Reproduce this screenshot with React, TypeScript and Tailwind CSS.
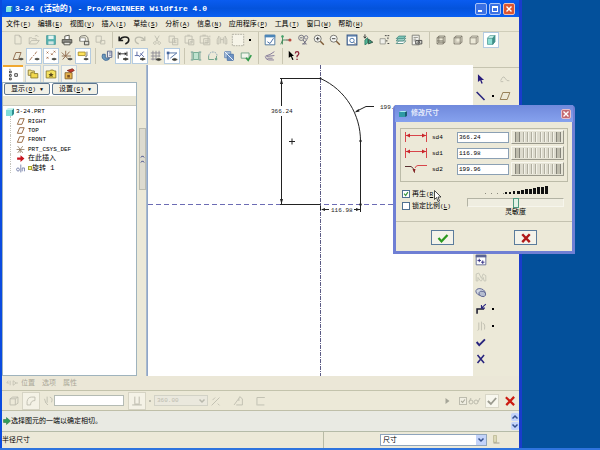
import React, { useState } from "react";
import clsx from "clsx";
import { twMerge } from "tailwind-merge";

type GlyphProps = { children: React.ReactNode; className?: string };

const Glyph = ({ children, className }: GlyphProps) => (
  <svg
    viewBox="0 0 16 16"
    className={twMerge("size-4 shrink-0", className)}
    fill="none"
    stroke="#4b4b44"
    aria-hidden="true"
  >
    {children}
  </svg>
);

const GRAY = "#bdbcae";

const icons: Record<string, React.ReactNode> = {
  // File
  new: <path d="M4.5 2.5h5l2 2v8h-7z M9.500 2.500v2h2" stroke={GRAY} />,
  open: <path d="M2.500 12.500v-7h3l1 1h4v2M2.500 12.500l2.500-4h9l-3 4zM9 3.500q3-2 4 1" stroke={GRAY} />,
  save: (
    <>
      <path d="M3 3h10v10H3z" fill="#58b3b0" stroke="#4d9c9c" />
      <path d="M5 3h6v4H5z" fill="#e4f4f2" stroke="none" />
      <path d="M5 9.500h6V13H5z" fill="#d2e6e4" stroke="none" />
    </>
  ),
  print: (
    <>
      <path d="M5.500 7V3.500l5-1V7" fill="#fff" />
      <path d="M2.500 7.500h11v4h-11z" fill="#8b8b86" />
      <path d="M4.500 10.500h7v3h-7z" fill="#e6e6e0" />
    </>
  ),
  mail: (
    <>
      <path d="M3 9.500V5q1-2 5-2h2q3 1 3 6" stroke="#6f6f68" />
      <path d="M3.500 5.500h6v4h-6z" fill="#fff" stroke="#8a8a82" />
      <path d="M8.500 9.500h5v4h-5z" fill="#dcdcd4" stroke="#44443e" />
    </>
  ),
  send: <path d="M3.500 3.500h6v7h-6zM8.500 8.500h5v4h-5z" stroke={GRAY} />,
  // Edit
  undo: <path d="M2.500 4v4.500H7M3 8C6 3 13.500 4 13.500 8q0 3-4 4.500" stroke="#1c1c1c" strokeWidth="1.8" />,
  redo: <path d="M13.500 4v4.500H9M13 8C10 3 2.500 4 2.500 8q0 3 4 4.500" stroke={GRAY} strokeWidth="1.4" />,
  cut: <path d="M5.500 3l4 7M10.500 3l-4 7M5.500 10a1.500 1.500 0 1 0 .1 0M10.500 10a1.500 1.500 0 1 0 .1 0" stroke={GRAY} />,
  copy: <path d="M3.500 3.500h6v7h-6zM7.500 6.500h6v7h-6zM9 9h3M9 11h3" stroke={GRAY} />,
  paste: <path d="M3.500 3.500h8v8h-8zM7.500 7.500h6v6h-6zM9 10h3M6 2.500h3" stroke={GRAY} />,
  pasteSpecial: <path d="M2.500 3.500h9v8h-9zM6.500 6.500h7v7h-7zM8 9h4M8 11h4M5 2.500h4M13.500 3v2" stroke={GRAY} />,
  find: <path d="M2.500 12.500v-5l2-4v9zM13.500 12.500v-5l-2-4v9zM6.500 5v7M9.500 5v7M6.500 7.500h3" stroke={GRAY} />,
  select: <path d="M1.500 1.500h13v13h-13z" fill="#f6f4e8" stroke="#aaa99c" strokeDasharray="2 1" />,
  // View
  repaint: (
    <>
      <path d="M2.500 2.500h11v11h-11z" fill="#fff" stroke="#416f9a" />
      <path d="M2 2h12v3H2z" fill="#4c86b8" stroke="none" />
      <path d="M5 10l3 2 4-6" stroke="#355f9a" />
    </>
  ),
  spin: (
    <>
      <path d="M4 3v5l4 0M4 8v5M4 8l-2 5" stroke="#3f8657" />
      <path d="M8 8h4" stroke="#444" />
      <circle cx="4" cy="4" r="1.500" fill="#45a36b" stroke="none" />
      <circle cx="12.500" cy="8" r="1.800" fill="#b9483c" stroke="none" />
    </>
  ),
  orientMode: (
    <>
      <circle cx="6" cy="5.500" r="3" stroke="#6b6b77" />
      <circle cx="11.500" cy="5" r="2" stroke="#77778a" />
      <path d="M4.500 5.500h3M8 8l4 5M12.500 7.500l-4 5M7 12.500h4" stroke="#5b5b74" />
    </>
  ),
  zoomIn: (
    <>
      <circle cx="6.500" cy="6.500" r="4" fill="#f6f7f4" stroke="#6d6d68" />
      <path d="M4.500 6.500h4M6.500 4.500v4" stroke="#333" />
      <path d="M9.500 9.500l4 4" stroke="#7d5a36" strokeWidth="1.600" />
    </>
  ),
  zoomOut: (
    <>
      <circle cx="6.500" cy="6.500" r="4" fill="#f6f7f4" stroke="#6d6d68" />
      <path d="M4.500 6.500h4" stroke="#333" />
      <path d="M9.500 9.500l4 4" stroke="#7d5a36" strokeWidth="1.600" />
    </>
  ),
  refit: (
    <>
      <path d="M2.500 2.500h11v11h-11z" fill="#fff" stroke="#3e5f8c" strokeWidth="1.400" />
      <path d="M3 3.500h10" stroke="#3e6ea8" />
      <circle cx="8" cy="8.500" r="2.500" stroke="#3e6ea8" />
      <path d="M10 10.500l2 2" stroke="#555" />
    </>
  ),
  reorient: (
    <>
      <path d="M4.500 8l3-2.500v6l-3 2z" fill="#53b795" stroke="#2f7f68" />
      <path d="M4.500 1.500v4M3 4l1.500 2L6 4" stroke="#2b2b2b" />
      <path d="M8.500 7l5 3.500-5 2z" fill="#3a9c7c" stroke="#2b4b40" />
    </>
  ),
  views: (
    <>
      <path d="M3.500 6.500h6v6h-6z" fill="#f0f0ea" stroke="#9a9a90" />
      <path d="M9 3h2M12 3h2M12.500 5v2M10 9h2M12 12h2" stroke="#333" />
    </>
  ),
  layers: (
    <>
      <path d="M2.500 12l3-3h8l-3 3z" fill="#fff" stroke="#4f8b84" />
      <path d="M2.500 9l3-3h8l-3 3z" fill="#a8dcd0" stroke="#4f8b84" />
      <path d="M2.500 6.500l3-3h8l-3 3z" fill="#7cc8b8" stroke="#4f8b84" />
    </>
  ),
  viewManager: (
    <>
      <path d="M2.500 2.500h8v11h-8z" fill="#f7f7f2" stroke="#77776f" />
      <path d="M4 5h5M4 7h3M4 9h2" stroke="#88887e" />
      <path d="M6.500 8.500h7v4h-7z" fill="#d8d8d0" stroke="#444" />
      <circle cx="10" cy="10.500" r="1" stroke="#333" />
    </>
  ),
  wireframe: <path d="M3.500 5.500h7v7h-7zM5.500 3.500h7v7h-7zM3.500 5.500l2-2M10.500 5.500l2-2M3.500 12.500l2-2M10.500 12.500l2-2M3.500 9h7" stroke="#7a7668" />,
  hiddenLine: (
    <>
      <path d="M5.500 3.500v7h7M3.500 12.500l2-2" stroke="#b9b5a8" />
      <path d="M3.500 5.500h7v7h-7zM3.500 5.500l2-2h7v7l-2 2M10.500 5.500l2-2" stroke="#7a7668" />
    </>
  ),
  noHidden: <path d="M3.500 5.500h7v7h-7zM3.500 5.500l2-2h7v7l-2 2M10.500 5.500l2-2" stroke="#8a8678" />,
  shaded: (
    <>
      <path d="M4 6h6v7H4z" fill="#8fe0d6" stroke="#5fa69f" />
      <path d="M4 6l2.500-3h6L10 6z" fill="#d3f6f0" stroke="#5fa69f" />
      <path d="M10 6l2.500-3v7L10 13z" fill="#3f8f88" stroke="#3f8f88" />
    </>
  ),
  // Datum display
  plane: (
    <>
      <path d="M2.500 12l3-8h6l-3 8z" stroke="#8a6547" />
      <path d="M9 11.500q2.500-2 5 0q-2.500 2-5 0" fill="#444" />
    </>
  ),
  axis: (
    <>
      <path d="M3 13l3-4M7 8l1-1M9 6l2-3" stroke="#a06a48" />
      <path d="M9 11.500q2.500-2 5 0q-2.500 2-5 0" fill="#444" />
    </>
  ),
  points: (
    <>
      <path d="M3 3l2 2M5 3L3 5M8 5l2 2M10 5L8 7M3 9l2 2M5 9l-2 2M11 2l2 2M13 2l-2 2" stroke="#a06a48" />
      <path d="M9 11.500q2.500-2 5 0q-2.500 2-5 0" fill="#444" />
    </>
  ),
  csys: (
    <>
      <path d="M2 4l8 8M3 12l8-9M6.500 2v6h6M2 8h4" stroke="#8a6547" />
      <path d="M9 11.500q2.500-2 5 0q-2.500 2-5 0" fill="#444" />
    </>
  ),
  note: (
    <>
      <path d="M2.500 3.500h8v4h-8z" fill="#ffe45c" stroke="#a58a2a" />
      <path d="M12.500 3v5l-2 1" stroke="#666" />
      <path d="M9 11.500q2.500-2 5 0q-2.500 2-5 0" fill="#444" />
    </>
  ),
  // Sketcher display
  sketchView: (
    <>
      <path d="M8.500 2.500h5v7h-5z" fill="#fff" stroke="#46537f" />
      <path d="M10 4.500h3M10 7h3" stroke="#46537f" />
      <path d="M3 6q-2 5 3 7q4 0 5-2l-5-1V6z" fill="#6c9bc0" stroke="#3c6491" />
    </>
  ),
  dims: (
    <>
      <path d="M2.500 3v8M12.500 3v5M3 5.500h9" stroke="#222" />
      <path d="M3 5.500l2-2v4zM12 5.500l-2-2v4z" fill="#222" stroke="none" />
      <path d="M8 11.500q3-2.500 6 0q-3 2.500-6 0" fill="#333" />
    </>
  ),
  constraints: (
    <>
      <path d="M4.500 3v4M2 7.500h5M7 9l5-6M8.500 5l4 4" stroke="#4c5d9c" />
      <path d="M8 11.500q3-2.500 6 0q-3 2.500-6 0" fill="#333" />
    </>
  ),
  grid: (
    <>
      <path d="M2 4.500h11M2 8h11M2 11.500h7M4.500 2v11M8 2v11M11.500 2v7" stroke="#8b8994" />
      <path d="M8 12q3-2.500 6 0q-3 2.500-6 0" fill="#333" />
    </>
  ),
  vertices: (
    <>
      <path d="M3.500 12V4.500h10L6 10.500" stroke="#45669c" />
      <path d="M2 3h3v3H2z" fill="#45669c" stroke="none" />
      <path d="M8 12q3-2.500 6 0q-3 2.500-6 0" fill="#333" />
    </>
  ),
  shadeLoops: (
    <>
      <path d="M5 4h6v8H5z" fill="#bfe3cf" stroke="#6aa58c" />
      <path d="M2 3.500h3M11 3.500h3M2 12.500h3M11 12.500h3M3.500 3v10M12.500 3v10" stroke="#6f9f93" />
    </>
  ),
  openEnds: (
    <>
      <path d="M3 8q1-5 6-4.500 4 1 3.500 5" stroke="#7d9bb0" strokeDasharray="2 1" />
      <path d="M3 8v4h6M12 8v4" stroke="#659c82" />
      <circle cx="11.500" cy="11.500" r="1.500" fill="#76a993" stroke="none" />
    </>
  ),
  overlap: (
    <>
      <path d="M3 3h7v7H3z" fill="#a9c1de" stroke="#6a8cb8" />
      <path d="M6 6h7v7H6z" fill="#6f93c4" stroke="#4d73a8" />
      <path d="M3 3l10 10" stroke="#fff" />
    </>
  ),
  requirements: (
    <>
      <path d="M2.500 4.500h9v6h-9z" fill="#f2f5ec" stroke="#6aa080" />
      <path d="M8 10l2.500 3L14 7" stroke="#2f9a4a" strokeWidth="1.800" />
    </>
  ),
  hatch: <path d="M3 8q5-1 10-5M4 8.500l9-1M2.500 8.500q1 4 4 4h6M5 10.500h6" stroke="#7a6f92" />,
  whatsThis: (
    <>
      <path d="M2 2l6 6H5.500l2 4-1.500.5-1.500-4L2 10z" fill="#000" stroke="none" />
      <path d="M9.500 5q0-2 2-2t2 2q0 1.500-2 3v1.500M11.500 11v1.500" stroke="#8c2438" strokeWidth="1.500" />
    </>
  ),
  // Sketch tools
  arrow: <path d="M4.500 2.500v9l2.500-2 1.500 4 1.500-.6L8.500 9h3z" fill="#281c7c" stroke="none" />,
  spline: <path d="M3 10q3-7 5-3t5 3M3 11h3" stroke={GRAY} />,
  line: <path d="M3 3.500l9 9" stroke="#28247e" strokeWidth="1.800" />,
  datum: <path d="M2.500 12l3-8h8l-3 8z" stroke="#8a7147" />,
  rect: <path d="M3.500 4.500h9v7h-9z" stroke="#28247e" />,
  circle: <circle cx="8" cy="8" r="4.500" stroke="#28247e" />,
  arc: <path d="M3 12q0-8 9-8" stroke="#28247e" />,
  fillet: <path d="M3 3v5q0 4 5 4h5" stroke="#28247e" />,
  point: <path d="M8 4v8M4 8h8" stroke="#28247e" />,
  modify: (
    <>
      <path d="M2.500 2.500h11v11h-11z" fill="#fff" stroke="#5a6394" />
      <path d="M2 2h12v3H2z" fill="#5a6394" stroke="none" />
      <path d="M4 8.500h4M8 10.500h4M10 8.500v4M6 6.500v4" stroke="#28247e" />
    </>
  ),
  text: <path d="M2.500 12.500v-8l3-1 3 6 2-5 3 2v6h-2l-1-4-2 4h-1l-3-4v4z" stroke="#c4c3b6" />,
  palette: (
    <>
      <ellipse cx="7.500" cy="7" rx="5.500" ry="3.800" fill="#d3d9e4" stroke="#5d6490" transform="rotate(20 7.500 7)" />
      <ellipse cx="9.500" cy="9" rx="4" ry="3" fill="#b5bdd0" stroke="#5d6490" transform="rotate(20 9.500 9)" />
    </>
  ),
  trim: (
    <>
      <path d="M3.500 13.500V8h8" stroke="#1d1d30" strokeWidth="1.800" />
      <path d="M13.500 2.500L9 6.500M8.500 3.500V7h4" stroke="#28247e" strokeWidth="1.200" />
    </>
  ),
  mirror: <path d="M5.500 4v8l-1.500 1M8.500 3v10M10 5q3 0 2 7" stroke={GRAY} />,
  done: <path d="M3 8l3 3.500L12.500 5" stroke="#28247e" strokeWidth="2.200" />,
  quit: <path d="M4 3.500l7.500 9M11.500 3.500l-7.500 9" stroke="#28247e" strokeWidth="1.800" />,
  // Dashboard
  solid: <path d="M3.500 5.500h6v7h-6zM3.500 5.500l3-2h6v7l-3 2M9.500 5.500l3-2" stroke={GRAY} />,
  surface: <path d="M3.500 12.500v-4q1-5 5-5h4v4q-5 0-5 5z" stroke={GRAY} />,
  thin: <path d="M4 5.500q1 6 4 7M7 3v7M10 3.500q4 1 2 6" stroke={GRAY} />,
  sides: <path d="M5.500 3v8M10.500 3v8M2.500 12.500h11M5 11.500h6" stroke="#b5b4a6" />,
  removeMaterial: <path d="M3 13l9-9M4 7l3-3M10 11l2 2" stroke={GRAY} />,
  thicken: <path d="M3.500 12.500L9 5l1-2 3 2.500v7H6M9 5v3" stroke={GRAY} />,
  wrap: <path d="M4.500 13v-9h9M5 12.500h8" stroke={GRAY} />,
  handle: <path d="M1 8h3M5.500 5v6M1 8l2-3M9.500 5v6l4-3zM13 8h3" stroke={GRAY} />,
};

type ToolProps = { name: string; active?: boolean };

const Tool = ({ name, active }: ToolProps) => (
  <button
    type="button"
    aria-label={name}
    className={clsx(
      "flex size-4 shrink-0 items-center justify-center",
      active && "border border-[#b4cbe0] bg-white"
    )}
  >
    <Glyph className="size-[14px]">{icons[name]}</Glyph>
  </button>
);

const Divider = () => (
  <span className="flex h-4 w-2 shrink-0 justify-center">
    <span className="h-full w-px bg-[#c9c6b2]" />
  </span>
);

const Caret = () => (
  <span className="flex w-2 shrink-0 justify-center">
    <span className="size-[2px] bg-black" />
  </span>
);

const ChevronIcon = ({ up, className }: { up?: boolean; className?: string }) => (
  <svg
    viewBox="0 0 8 8"
    className={twMerge("size-2", className)}
    fill="none"
    stroke="currentColor"
    strokeWidth="1.500"
    aria-hidden="true"
  >
    <path d={up ? "M1.500 5.500L4 3l2.500 2.500" : "M1.500 2.500L4 5l2.500-2.500"} />
  </svg>
);

const Key = ({ letter }: { letter: string }) => (
  <span className="text-[6px]">
    (<u>{letter}</u>)
  </span>
);

const menus = [
  ["文件", "F"],
  ["编辑", "E"],
  ["视图", "V"],
  ["插入", "I"],
  ["草绘", "S"],
  ["分析", "A"],
  ["信息", "N"],
  ["应用程序", "P"],
  ["工具", "T"],
  ["窗口", "W"],
  ["帮助", "H"],
];

const fileTools = ["new", "open", "save", "print", "mail", "send"];
const editTools = ["undo", "redo", "cut", "copy", "paste", "pasteSpecial", "find", "select"];
const viewTools = ["repaint", "spin", "orientMode", "zoomIn", "zoomOut", "refit", "reorient", "views", "layers", "viewManager"];
const displayTools = ["wireframe", "hiddenLine", "noHidden", "shaded"];
const datumTools = ["plane", "axis", "points", "csys", "note"];
const sketchTools = ["sketchView", "dims", "constraints", "grid", "vertices"];
const checkTools = ["shadeLoops", "openEnds", "overlap", "requirements"];
const pressed = ["shaded", "axis", "points", "note", "dims", "constraints", "vertices"];

const ToolGroup = ({ names, className }: { names: string[]; className: string }) => (
  <div className={clsx("flex shrink-0 justify-between", className)}>
    {names.map((name) => (
      <Tool key={name} name={name} active={pressed.includes(name)} />
    ))}
  </div>
);

const TitleBar = () => (
  <header className="flex h-[17px] shrink-0 items-center bg-linear-to-b from-[#0a5cf0] via-[#0453dc] to-[#0a5ff2] pr-1 pl-[3px]">
    <svg viewBox="0 0 8 8" className="size-2" aria-hidden="true">
      <path d="M1 2h5v5H1z" fill="#7ee6e0" />
      <path d="M6 2l1.500-1v5L6 7z" fill="#268f96" />
      <path d="M1 2l1.500-1h5L6 2z" fill="#c8faf4" />
    </svg>
    <h1 className="ml-0.5 flex-1 text-[8px] font-bold whitespace-pre text-white">
      3-24 (活动的) - Pro/ENGINEER Wildfire 4.0
    </h1>
    <div className="flex gap-0.5">
      <button type="button" aria-label="Minimize" className="flex size-3 items-end rounded-xs border border-[#a9c4f8] bg-[#3b71e4] p-0.5">
        <span className="h-0.5 w-1 bg-white" />
      </button>
      <button type="button" aria-label="Maximize" className="size-3 rounded-xs border border-[#a9c4f8] bg-[#3b71e4] p-0.5">
        <span className="block size-full border border-t-2 border-white" />
      </button>
      <button type="button" aria-label="Close" className="size-3 rounded-xs border border-[#f0c0b4] bg-[#dd5530] p-px">
        <svg viewBox="0 0 8 8" stroke="#fff" strokeWidth="1.400" aria-hidden="true">
          <path d="M1.500 1.500l5 5M6.500 1.500l-5 5" />
        </svg>
      </button>
    </div>
  </header>
);

const MenuBar = () => (
  <nav className="flex h-[14px] shrink-0 items-center gap-[7px] pl-1">
    {menus.map(([label, key]) => (
      <button key={key} type="button" className="shrink-0 whitespace-nowrap">
        {label}
        <Key letter={key} />
      </button>
    ))}
  </nav>
);

const Toolbars = () => (
  <div className="shrink-0 border-t border-[#cfcdb9] pb-px pl-2">
    <div className="flex items-center">
      <ToolGroup names={fileTools} className="w-[98px]" />
      <Divider />
      <ToolGroup names={editTools} className="w-[130px]" />
      <Caret />
      <Divider />
      <ToolGroup names={viewTools} className="w-[163px]" />
      <Divider />
      <ToolGroup names={displayTools} className="w-[66px]" />
    </div>
    <div className="flex items-center">
      <ToolGroup names={datumTools} className="w-[81px]" />
      <Divider />
      <ToolGroup names={sketchTools} className="w-[81px]" />
      <Divider />
      <ToolGroup names={checkTools} className="w-[66px]" />
      <Divider />
      <Tool name="hatch" />
      <Divider />
      <Tool name="whatsThis" />
    </div>
  </div>
);

const planeIcon = <path d="M2.500 13l4-10h8l-4 10z" stroke="#8f6036" strokeWidth="1.600" />;

const treeItems = [
  { label: "RIGHT", icon: planeIcon },
  { label: "TOP", icon: planeIcon },
  { label: "FRONT", icon: planeIcon },
  {
    label: "PRT_CSYS_DEF",
    icon: <path d="M3 2l9 12M3 14l9-12M1 8h14M7.500 8v6" stroke="#8d775c" strokeWidth="1.400" />,
  },
  { label: "在此插入", icon: <path d="M2 6h6V2l7 6-7 6v-4H2z" fill="#c8141e" stroke="none" /> },
  {
    label: "旋转 1",
    mark: true,
    icon: <path d="M1 10q0-3 2.500-3T6 10t-2.500 2.500T1 10M8.500 1v14M11 13V7h4v6" stroke="#6470a0" strokeWidth="1.400" />,
  },
];

const ModelTree = () => (
  <aside className="flex w-[135px] shrink-0 flex-col">
    <div className="flex h-[17px] shrink-0 gap-0.5 pl-px">
      <button type="button" aria-label="Model tree" className="flex w-5 items-center justify-center border-t-2 border-[#f0a830] bg-white">
        <Glyph className="size-[14px]">
          <path d="M4 3.500h2v2H4zM4 7.500h2v2H4zM4 11.500h2v2H4zM4 1.500h1M10 6.500h3v3h-3z" stroke="#333" />
        </Glyph>
      </button>
      <button type="button" aria-label="Folders" className="flex w-4 items-center justify-center border border-b-0 border-[#c6d3dc] bg-[#f6f5ec]">
        <Glyph className="size-[14px]">
          <path d="M2.500 3.500h3l1 1h3v5h-7z" fill="#f5e48a" stroke="#8a7a2e" />
          <path d="M5.500 6.500h3l1 1h4v5h-8z" fill="#f2d94e" stroke="#8a7a2e" />
        </Glyph>
      </button>
      <button type="button" aria-label="Favorites" className="flex w-4 items-center justify-center border border-b-0 border-[#c6d3dc] bg-[#f6f5ec]">
        <Glyph className="size-[14px]">
          <path d="M2.500 4.500h4l1-1h3l1 1h2v8h-11z" fill="#f5e25e" stroke="#8a7a2e" />
          <path d="M8 6l1 2h2L9.500 9.500l.5 2-2-1-2 1 .5-2L5 8h2z" fill="#5a4a1e" stroke="none" />
        </Glyph>
      </button>
      <button type="button" aria-label="Connections" className="flex w-4 items-center justify-center border border-b-0 border-[#c6d3dc] bg-[#f6f5ec]">
        <Glyph className="size-[14px]">
          <path d="M3.500 6.500h8v7h-8z" fill="#e8b54e" stroke="#84602a" />
          <path d="M6 4l6-2 2 2-4 2z" fill="#c23a2c" stroke="#80281e" />
          <path d="M6 9h3v3H6z" fill="#7a4f22" stroke="none" />
        </Glyph>
      </button>
    </div>
    <div className="flex min-h-0 flex-1 flex-col border border-[#9fb3bd] bg-white">
      <div className="flex shrink-0 gap-0.5 px-px pb-px">
        <button type="button" className="h-3 w-[46px] rounded-xs border border-[#5d7690] bg-[#f1f0e6] leading-none whitespace-nowrap">
          显示
          <Key letter="O" /> <span className="text-[5px]">▼</span>
        </button>
        <button type="button" className="h-3 w-[46px] rounded-xs border border-[#5d7690] bg-[#f1f0e6] leading-none whitespace-nowrap">
          设置
          <Key letter="G" /> <span className="text-[5px]">▼</span>
        </button>
      </div>
      <div className="h-[10px] shrink-0 border-b border-[#c7c7bb] bg-[#e9e7d6]" />
      <div className="pt-px pl-[3px]">
        <ul className="grid h-[66px] auto-rows-fr">
          <li className="flex items-center gap-0.5 text-[6px]">
            <svg viewBox="0 0 8 8" className="size-2" aria-hidden="true">
              <path d="M0 2h6v6H0z" fill="#7fded8" />
              <path d="M6 2l2-2v6L6 8z" fill="#2f8f90" />
              <path d="M0 2l2-2h6L6 2z" fill="#c8f4ee" />
            </svg>
            3-24.PRT
          </li>
          {treeItems.map((item) => (
            <li key={item.label} className="ml-1 flex items-center border-l border-dotted border-[#c4c4bc] pl-[5px]">
              <Glyph className="mr-[3px] size-[9px]">{item.icon}</Glyph>
              {item.mark && <span className="size-1 border border-[#a8a830] bg-[#f4f08a]" />}
              <span className={item.label.charCodeAt(0) < 128 ? "text-[6px]" : ""}>{item.label}</span>
            </li>
          ))}
        </ul>
      </div>
    </div>
  </aside>
);

const Splitter = () => (
  <div className="flex w-[11px] shrink-0">
    <div className="flex flex-1 flex-col border-r border-[#a8b8cc] pl-0.5">
      <button type="button" aria-label="Collapse panel" className="mt-[63px] flex h-[62px] flex-col items-center justify-center border border-[#bcbcb0] bg-[#dddbd0] text-[#23307c]">
        <ChevronIcon up className="size-[5px]" />
        <ChevronIcon up className="size-[5px]" />
      </button>
    </div>
    <div className="w-[3px] border-r border-[#8fa6c8] bg-[#d3deee]" />
  </div>
);

// Drawing coordinates are in window space, shifted to the canvas origin.
const Canvas = () => (
  <svg className="min-w-0 flex-1 self-stretch bg-white" role="img" aria-label="Sketch">
    <g transform="translate(-148 -65)" fill="none" stroke="#222" strokeWidth="1">
      <path d="M320.500 65v1000" stroke="#5c5c86" strokeDasharray="4 1 1 1" />
      <path d="M148 204.500h2000" stroke="#6c6cb4" strokeDasharray="5 3" />
      <path d="M280 78.500h40.500M280 204.500h40.500M360.500 141v63.500" />
      <path d="M281.500 79v27M281.500 116v88" />
      <path d="M320.500 78.500C346 90 360.500 115 360.500 141" />
      <path d="M289 141.500h6M292 138.500v6" />
      <path d="M356 111.500l10-5h8" />
      <path d="M320.500 210v-4M360.500 205v7M322 209.500h7M354 209.500h6" />
      <g fill="#222" stroke="none">
        <path d="M281.500 79l-1.500 5h3zM281.500 204l-1.500-5h3z" />
        <path d="M354.500 112.500l4-3.500 1 2.500zM321 209.500l4-1.500v3zM360 209.500l-4-1.500v3z" />
        <circle cx="320.500" cy="78.500" r="1" />
        <circle cx="360.500" cy="141" r="1.200" />
        <circle cx="360.500" cy="204.500" r="1.200" />
        <g className="text-[6px]">
          <text x="271" y="113">366.24</text>
          <text x="331" y="212">116.98</text>
          <text x="380" y="109">199.96</text>
        </g>
      </g>
    </g>
  </svg>
);

const sideTools: { name: string; caret?: boolean; extra?: string }[] = [
  { name: "arrow", extra: "spline" },
  { name: "line", caret: true, extra: "datum" },
  { name: "rect" },
  { name: "circle", caret: true },
  { name: "arc", caret: true },
  { name: "fillet", caret: true },
  { name: "spline" },
  { name: "point", caret: true },
  { name: "rect", caret: true },
  { name: "dims" },
  { name: "circle" },
  { name: "modify" },
  { name: "text" },
  { name: "palette" },
  { name: "trim", caret: true },
  { name: "mirror", caret: true },
  { name: "done" },
  { name: "quit" },
];

const SideToolbar = () => (
  <div className="w-[46px] shrink-0 pt-0.5">
    <div className="border-t border-[#c6c4b0] pt-[3px]">
      <div className="grid h-[296px] auto-rows-fr">
        {sideTools.map((tool, i) => (
          <div key={i} className="flex items-center">
            <Tool name={tool.name} />
            <span className="w-2">{tool.caret && <Caret />}</span>
            {tool.extra && <Tool name={tool.extra} />}
          </div>
        ))}
      </div>
    </div>
  </div>
);

const Dashboard = () => (
  <section className="shrink-0">
    <div className="flex h-[15px] items-center gap-[7px] border-b border-[#c3c3ac] bg-[#ebe7d7] pl-1 text-[#aaa898]">
      <span className="-mr-1 flex">
        <Glyph className="size-3">{icons.handle}</Glyph>
      </span>
      <button type="button">位置</button>
      <button type="button">选项</button>
      <button type="button">属性</button>
    </div>
    <div className="flex h-5 items-center border-b border-[#bfbfa8] pr-0.5 pl-1">
      <Tool name="solid" />
      <span className="flex border border-[#d6d4c4] bg-[#f4f2e6]">
        <Tool name="surface" />
      </span>
      <span className="-mr-0.5 flex">
        <Tool name="thin" />
      </span>
      <input aria-label="Placement" className="h-[11px] w-[70px] border border-[#b4bbb4] bg-white px-0.5" />
      <span className="ml-1 flex border border-[#d6d4c4] bg-[#f4f2e6]">
        <Tool name="sides" />
      </span>
      <span className="flex w-2 justify-center">
        <span className="size-[2px] bg-[#bdbcae]" />
      </span>
      <div className="relative">
        <select aria-label="Angle" disabled className="h-[11px] w-[54px] appearance-none border border-[#d2d2c6] bg-[#eae8dd] px-0.5 text-[6px] text-[#bcbbae] opacity-100">
          <option>360.00</option>
        </select>
        <ChevronIcon className="absolute top-0.5 right-0.5 text-[#b8b8ac]" />
      </div>
      <div className="flex gap-1.5">
        <Tool name="removeMaterial" />
        <Tool name="thicken" />
        <Tool name="wrap" />
      </div>
      <div className="ml-auto flex items-center">
        <svg viewBox="0 0 8 8" className="mr-2 size-2" aria-hidden="true">
          <path d="M2.500 1l4 3-4 3z" fill="#a5a598" />
        </svg>
        <label className="relative flex items-center">
          <input type="checkbox" aria-label="Preview" defaultChecked disabled className="absolute size-2 opacity-0" />
          <span className="size-2 border border-[#bdbcae] bg-[#f0eee2]">
            <svg viewBox="0 0 8 8" fill="none" stroke="#aaa99a" strokeWidth="1.500" aria-hidden="true">
              <path d="M1.500 4l2 2 3-4" />
            </svg>
          </span>
          <svg viewBox="0 0 14 8" className="h-2 w-[14px]" fill="none" stroke="#bdbcae" aria-hidden="true">
            <circle cx="4" cy="5" r="2" />
            <circle cx="9" cy="5" r="2" />
            <path d="M2 5l2-4M11 5l2-4" />
          </svg>
        </label>
        <button type="button" aria-label="Apply" className="mx-1 flex size-[14px] items-center justify-center border border-[#d9d7c8] bg-[#f8f7ee]">
          <Glyph className="size-3">
            <path d="M2.500 8l4 4 7-8" stroke="#9b9b90" strokeWidth="2.500" />
          </Glyph>
        </button>
        <button type="button" aria-label="Cancel feature" className="flex size-[14px] items-center justify-center">
          <Glyph className="size-3">
            <path d="M2.500 3l11 10.500M13.500 2.500L3 13.500" stroke="#cc1c12" strokeWidth="3" />
          </Glyph>
        </button>
      </div>
    </div>
    <div className="flex h-[21px] items-center border-b border-[#b5bba8] bg-[#e9eae3] pl-px">
      <Glyph className="size-2">
        <path d="M1 5h6V1l8 7-8 7v-4H1z" fill="#2f9c5a" stroke="#1c6a3a" />
      </Glyph>
      <p className="flex-1">选择图元的一端以确定相切。</p>
      <div className="flex flex-col gap-px">
        <button type="button" aria-label="Scroll up" className="flex size-2 items-center justify-center rounded-xs bg-[#c3d3fa] text-[#34508e]">
          <ChevronIcon up />
        </button>
        <button type="button" aria-label="Scroll down" className="flex size-2 items-center justify-center rounded-xs bg-[#c3d3fa] text-[#34508e]">
          <ChevronIcon />
        </button>
      </div>
    </div>
    <footer className="flex h-4 items-center">
      <p className="flex-1">半径尺寸</p>
      <span className="mr-[56px] h-full w-px bg-[#b9bba6]" />
      <div className="relative">
        <select aria-label="Selection filter" className="h-3 w-[107px] appearance-none border border-[#8fa5bd] bg-white px-0.5 leading-[10px]">
          <option>尺寸</option>
        </select>
        <span className="pointer-events-none absolute top-px right-px flex size-[10px] items-center justify-center bg-[#c3d3fa] text-[#34508e]">
          <ChevronIcon />
        </span>
      </div>
      <Glyph className="mr-[18px] ml-0.5 size-3">
        <path d="M6 2h4v9H6z" fill="#dcd9b8" stroke="#b9b692" />
        <path d="M6 12h8" stroke="#8c8a78" />
      </Glyph>
    </footer>
  </section>
);

const LinearDim = () => (
  <svg viewBox="0 0 24 12" className="h-3 w-6" fill="none" stroke="#d8454a" aria-hidden="true">
    <path d="M1.500 1v10M22.500 1v10M2 4.500h20" />
    <path d="M2 4.500l4-2v4zM22 4.500l-4-2v4z" fill="#c8242a" stroke="none" />
  </svg>
);

const RadialDim = () => (
  <svg viewBox="0 0 24 12" className="h-3 w-6" fill="none" aria-hidden="true">
    <path d="M1 3.500h6q3 1 3.500 6" stroke="#5a3030" />
    <path d="M11 5q1-2.500 3-2.500h9" stroke="#d8454a" />
    <path d="M10.500 10l-2-4h3z" fill="#8a2424" />
  </svg>
);

const knobLines = [9, 13, 17, 21, 26, 30, 34, 38];

const Knob = ({ label }: { label: string }) => (
  <button type="button" aria-label={label} className="flex h-[14px] w-[53px] items-center justify-center border border-[#f8f7ee] border-r-[#98978a] border-b-[#98978a] bg-[#e6e4d6]">
    <svg viewBox="0 0 48 10" className="h-[10px] w-12" aria-hidden="true">
      <path d="M1 0h46v10H1z" fill="#dddbce" />
      <path d="M1 0h5v10H1zM42 0h5v10h-5z" fill="#bebcad" />
      <path d="M1.500 0v10M5.500 0v10M42.500 0v10M46.500 0v10" stroke="#85847a" />
      {knobLines.map((x) => (
        <path key={x} d={`M${x}.5 0v10`} stroke="#b0aea0" />
      ))}
      {knobLines.map((x) => (
        <path key={x} d={`M${x + 1}.5 0v10`} stroke="#f3f2e8" />
      ))}
    </svg>
  </button>
);

const CheckRow = ({ label, letter, initial }: { label: string; letter: string; initial: boolean }) => {
  const [checked, setChecked] = useState(initial);
  return (
    <label className="relative flex h-3 items-center gap-0.5 whitespace-nowrap">
      <input
        type="checkbox"
        checked={checked}
        onChange={() => setChecked(!checked)}
        className="absolute size-2 opacity-0"
      />
      <span className="size-2 border border-[#4f7090] bg-white">
        {checked && (
          <svg viewBox="0 0 8 8" fill="none" stroke="#35943c" strokeWidth="1.600" aria-hidden="true">
            <path d="M1.500 3.500l2 2.500 3-4.500" />
          </svg>
        )}
      </span>
      <span>
        {label}
        <Key letter={letter} />
      </span>
    </label>
  );
};

const dimensions = [
  { name: "sd4", value: "366.24", icon: <LinearDim /> },
  { name: "sd1", value: "116.98", icon: <LinearDim /> },
  { name: "sd2", value: "199.96", icon: <RadialDim /> },
];

const ramp = [1, 1, 1, 1, 2, 2, 3, 3, 4, 5, 5, 6, 7, 7, 8];

const ModifyDialog = () => (
  <div role="dialog" aria-label="修改尺寸" className="absolute top-[105px] left-[393px] w-[182px] rounded-t border-[3px] border-t-0 border-[#6f7fd4] bg-[#ece9d8]">
    <div className="-mx-px flex h-[17px] items-center bg-linear-to-b from-[#7089dc] to-[#86a2ee] pr-0.5 pl-1 text-[#e6ecfc]">
      <svg viewBox="0 0 8 8" className="size-2" aria-hidden="true">
        <path d="M0 2h6v5H0z" fill="#2f9aa6" />
        <path d="M6 2l2-1v5L6 7z" fill="#1b5d70" />
        <path d="M0 2l2-1h6L6 2z" fill="#a9ecec" />
      </svg>
      <h2 className="ml-1 flex-1 leading-none font-bold">修改尺寸</h2>
      <button type="button" aria-label="Close dialog" className="size-[10px] rounded-xs border border-[#e6c0cc] bg-[#c46a70]">
        <svg viewBox="0 0 8 8" stroke="#fff" strokeWidth="1.400" aria-hidden="true">
          <path d="M1.500 1.500l5 5M6.500 1.500l-5 5" />
        </svg>
      </button>
    </div>

    <div className="px-1 pt-1.5">
      <div className="flex flex-col gap-0.5 border border-[#bcbba8] px-[3px] pt-px pb-[5px]">
        {dimensions.map((dim) => (
          <div key={dim.name} className="flex items-center">
            {dim.icon}
            <label htmlFor={dim.name} className="ml-1 w-[25px] text-[6px]">
              {dim.name}
            </label>
            <input id={dim.name} defaultValue={dim.value} className="h-[11px] w-[52px] border border-[#8ba0b4] bg-white px-px text-[6px]" />
            <span className="ml-auto flex">
              <Knob label={`${dim.name} wheel`} />
            </span>
          </div>
        ))}
      </div>
      <div className="mt-1 flex justify-between">
        <div className="pt-0.5 pl-0.5">
          <CheckRow label="再生" letter="R" initial={true} />
          <CheckRow label="锁定比例" letter="L" initial={false} />
        </div>
        <div className="mr-1 flex w-[97px] flex-col items-center">
          <svg viewBox="0 0 66 8" className="mb-1 ml-1 h-2 w-[66px]" aria-hidden="true">
            {ramp.map((h, i) => (
              <rect key={i} x={i < 4 ? i * 6 : 4 + i * 4} y={8 - h} width={i < 4 ? 1 : i < 7 ? 2 : 3} height={h} fill={i < 4 ? "#8a897c" : "#111"} />
            ))}
          </svg>
          <input
            id="sensitivity"
            type="range"
            defaultValue="50"
            className="h-[9px] w-full appearance-none border border-[#b3b3a4] border-r-[#f6f5ec] border-b-[#f6f5ec] bg-[#efede0] [&::-webkit-slider-thumb]:h-[10px] [&::-webkit-slider-thumb]:w-[6px] [&::-webkit-slider-thumb]:appearance-none [&::-webkit-slider-thumb]:border [&::-webkit-slider-thumb]:border-[#4f9a80] [&::-webkit-slider-thumb]:bg-[#e2f2e6]"
          />
          <label htmlFor="sensitivity" className="leading-[10px]">
            灵敏度
          </label>
        </div>
      </div>
    </div>

    <div className="mt-1 flex justify-between border-t border-[#c4c2b0] px-[35px] pt-2 pb-1.5">
      <button type="button" aria-label="OK" className="flex h-[15px] w-[23px] items-center justify-center border border-[#5b7c9c] bg-[#f4f3ea]">
        <Glyph className="size-3">
          <path d="M2 8l4 4.500L14 4" stroke="#2c9a20" strokeWidth="3" />
        </Glyph>
      </button>
      <button type="button" aria-label="Cancel" className="flex h-[15px] w-[23px] items-center justify-center border border-[#5b7c9c] bg-[#f4f3ea]">
        <Glyph className="size-3">
          <path d="M3 3l10 10.500M13 3L3 13.500" stroke="#b01818" strokeWidth="3.200" />
        </Glyph>
      </button>
    </div>
  </div>
);

const Pointer = () => (
  <svg viewBox="0 0 8 12" className="pointer-events-none absolute top-[190px] left-[434px] h-3 w-2" aria-hidden="true">
    <path d="M.5.5v9l2-2 1.500 4 1.500-.6L4 7h3z" fill="#fff" stroke="#222" strokeWidth=".8" />
  </svg>
);

export default function App() {
  return (
    <div className="relative flex h-screen flex-col overflow-hidden bg-[#03509b] font-['Liberation_Mono','Noto_Sans_CJK_SC',monospace] text-[7px] leading-[9px] text-black">
      <div className="flex min-h-0 flex-1">
        <main className="flex min-w-0 flex-1 flex-col border-r-[3px] border-l-2 border-r-[#1a3ccc] border-l-[#0a4be0] bg-[#ece9d8]">
          <TitleBar />
          <MenuBar />
          <Toolbars />
          <div className="flex min-h-0 flex-1">
            <ModelTree />
            <Splitter />
            <Canvas />
            <SideToolbar />
          </div>
          <Dashboard />
        </main>
        <div className="w-[13%] shrink-0" />
      </div>
      <div className="h-0.5 shrink-0 bg-[#2f74de]" />
      <ModifyDialog />
      <Pointer />
    </div>
  );
}
